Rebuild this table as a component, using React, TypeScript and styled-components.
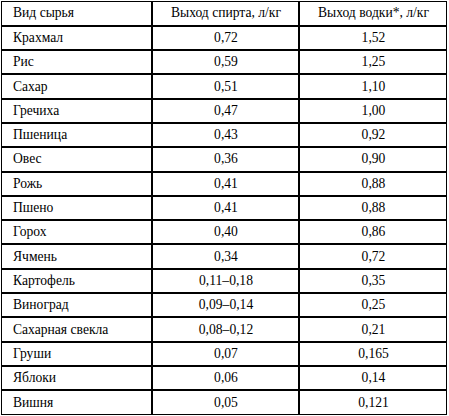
import styled, {createGlobalStyle} from 'styled-components'

interface YieldRow {
    name: string;
    spirit: string;
    vodka: string;
}

const rows: YieldRow[] = [
    {name: 'Крахмал', spirit: '0,72', vodka: '1,52'},
    {name: 'Рис', spirit: '0,59', vodka: '1,25'},
    {name: 'Сахар', spirit: '0,51', vodka: '1,10'},
    {name: 'Гречиха', spirit: '0,47', vodka: '1,00'},
    {name: 'Пшеница', spirit: '0,43', vodka: '0,92'},
    {name: 'Овес', spirit: '0,36', vodka: '0,90'},
    {name: 'Рожь', spirit: '0,41', vodka: '0,88'},
    {name: 'Пшено', spirit: '0,41', vodka: '0,88'},
    {name: 'Горох', spirit: '0,40', vodka: '0,86'},
    {name: 'Ячмень', spirit: '0,34', vodka: '0,72'},
    {name: 'Картофель', spirit: '0,11–0,18', vodka: '0,35'},
    {name: 'Виноград', spirit: '0,09–0,14', vodka: '0,25'},
    {name: 'Сахарная свекла', spirit: '0,08–0,12', vodka: '0,21'},
    {name: 'Груши', spirit: '0,07', vodka: '0,165'},
    {name: 'Яблоки', spirit: '0,06', vodka: '0,14'},
    {name: 'Вишня', spirit: '0,05', vodka: '0,121'},
];

const GlobalStyle = createGlobalStyle`
    body {
        margin: 0;
        background: #fff;
        font-family: "Liberation Serif", "Times New Roman", serif;
        color: #000;
    }
`;

const Page = styled.div`
    padding: 1px 0 0 1px;
`;

const Table = styled.table`
    width: 446px;
    border-collapse: collapse;
    border: 1px solid #000;
    font-family: "Liberation Serif", "Times New Roman", serif;
    font-size: 13.6px;
    color: #000;
`;

const Row = styled.tr`
    height: 24.3px;
`;

const Cell = styled.td<{$align?: 'left' | 'center'; $width?: number}>`
    padding: 0 10px 0 11px;
    text-align: ${props => props.$align || 'center'};
    width: ${props => props.$width ? props.$width + 'px' : 'auto'};
    border-left: 2px solid #000;
    border-top: 2px solid #000;
    vertical-align: middle;
    white-space: nowrap;
    &:first-child {
        border-left: 1px solid #000;
    }
`;

const HeadCell = styled(Cell).attrs({as: 'th'})`
    font-weight: normal;
    border-top: 1px solid #000;
`;

function App() {
    return (
        <Page>
            <GlobalStyle />
            <Table>
                <thead>
                    <Row>
                        <HeadCell $align="left" $width={128}>Вид сырья</HeadCell>
                        <HeadCell $width={124}>Выход спирта, л/кг</HeadCell>
                        <HeadCell>Выход водки*, л/кг</HeadCell>
                    </Row>
                </thead>
                <tbody>
                    {rows.map(row => (
                        <Row key={row.name}>
                            <Cell $align="left">{row.name}</Cell>
                            <Cell>{row.spirit}</Cell>
                            <Cell>{row.vodka}</Cell>
                        </Row>
                    ))}
                </tbody>
            </Table>
        </Page>
    )
}

export default App
